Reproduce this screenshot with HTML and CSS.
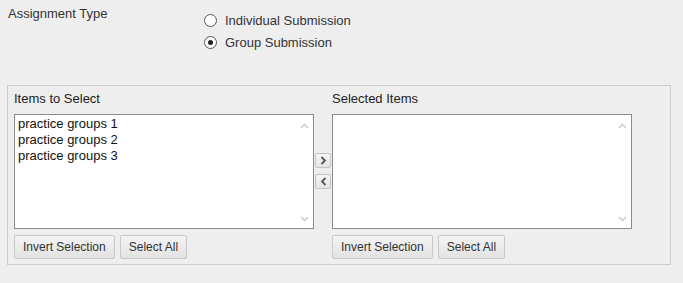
FILE: index.html
```html
<!DOCTYPE html>
<html lang="en">
<head>
  <meta charset="UTF-8" />
  <title>Assignment Type</title>
  <link rel="stylesheet" href="styles.css">
</head>
<body>
  <div class="type-row">
    <div class="type-label">Assignment Type</div>
    <div class="type-options">
      <label class="radio"><span class="dot"></span>Individual Submission</label>
      <label class="radio"><span class="dot on"></span>Group Submission</label>
    </div>
  </div>

  <div class="panel">
    <div class="col">
      <div class="col-title">Items to Select</div>
      <div class="listbox">
        <ul class="items">
          <li>practice groups 1</li>
          <li>practice groups 2</li>
          <li>practice groups 3</li>
        </ul>
        <div class="scroll">
          <svg width="9" height="6" viewBox="0 0 9 6"><path d="M1 5 L4.5 1.5 L8 5" fill="none" stroke="#c8c8c8" stroke-width="1.4"/></svg>
          <svg width="9" height="6" viewBox="0 0 9 6"><path d="M1 1 L4.5 4.5 L8 1" fill="none" stroke="#c8c8c8" stroke-width="1.4"/></svg>
        </div>
      </div>
      <div class="actions">
        <button class="btn">Invert Selection</button>
        <button class="btn">Select All</button>
      </div>
    </div>

    <div class="movers">
      <button class="mover"><svg width="7" height="9" viewBox="0 0 7 9"><path d="M1.5 1 L5 4.5 L1.5 8" fill="none" stroke="#555" stroke-width="1.8"/></svg></button>
      <button class="mover"><svg width="7" height="9" viewBox="0 0 7 9"><path d="M5.5 1 L2 4.5 L5.5 8" fill="none" stroke="#555" stroke-width="1.8"/></svg></button>
    </div>

    <div class="col">
      <div class="col-title">Selected Items</div>
      <div class="listbox">
        <ul class="items"></ul>
        <div class="scroll">
          <svg width="9" height="6" viewBox="0 0 9 6"><path d="M1 5 L4.5 1.5 L8 5" fill="none" stroke="#c8c8c8" stroke-width="1.4"/></svg>
          <svg width="9" height="6" viewBox="0 0 9 6"><path d="M1 1 L4.5 4.5 L8 1" fill="none" stroke="#c8c8c8" stroke-width="1.4"/></svg>
        </div>
      </div>
      <div class="actions">
        <button class="btn">Invert Selection</button>
        <button class="btn">Select All</button>
      </div>
    </div>
  </div>
</body>
</html>
```

FILE: styles.css
```css
body {
  margin: 0;
  background: #eeeeee;
  font-family: "Liberation Sans", Arial, sans-serif;
  font-size: 13px;
  color: #222;
}

.type-row {
  display: flex;
  padding: 6px 0 0 8px;
  height: 78px;
  box-sizing: border-box;
}

.type-label {
  width: 196px;
  color: #333;
}

.type-options {
  display: flex;
  flex-direction: column;
  gap: 6px;
  padding-top: 6px;
}

.radio {
  display: flex;
  align-items: center;
  gap: 8px;
  height: 16px;
  color: #333;
}

.dot {
  width: 11px;
  height: 11px;
  border: 1px solid #555;
  border-radius: 50%;
  background: #fff;
  display: flex;
  align-items: center;
  justify-content: center;
}

.dot.on::after {
  content: "";
  width: 5px;
  height: 5px;
  border-radius: 50%;
  background: #222;
}

.panel {
  margin: 7px 0 0 7px;
  width: 664px;
  height: 180px;
  box-sizing: border-box;
  border: 1px solid #cccccc;
  display: flex;
  padding: 6px 0 0 6px;
}

.col {
  width: 300px;
  display: flex;
  flex-direction: column;
}

.col-title {
  height: 22px;
  line-height: 14px;
  color: #222;
}

.listbox {
  height: 115px;
  box-sizing: border-box;
  border: 1px solid #8a8a8a;
  background: #fff;
  display: flex;
}

.items {
  flex: 1;
  list-style: none;
  margin: 0;
  padding: 1px 0 0 3px;
  line-height: 16px;
  color: #111;
}

.scroll {
  width: 17px;
  display: flex;
  flex-direction: column;
  justify-content: space-between;
  align-items: center;
  padding: 8px 0 6px;
}

.actions {
  display: flex;
  gap: 5px;
  margin-top: 6px;
}

.btn {
  height: 24px;
  padding: 0 8px;
  border: 1px solid #c8c8c8;
  border-radius: 2px;
  background: linear-gradient(#f4f4f4, #e2e2e2);
  font-family: inherit;
  font-size: 12px;
  color: #333;
}

.movers {
  width: 18px;
  display: flex;
  flex-direction: column;
  align-items: center;
  gap: 6px;
  padding-top: 61px;
}

.mover {
  width: 16px;
  height: 15px;
  padding: 0;
  border: 1px solid #c4c4c4;
  border-radius: 2px;
  background: linear-gradient(#f6f6f6, #e4e4e4);
  display: flex;
  align-items: center;
  justify-content: center;
}
```
